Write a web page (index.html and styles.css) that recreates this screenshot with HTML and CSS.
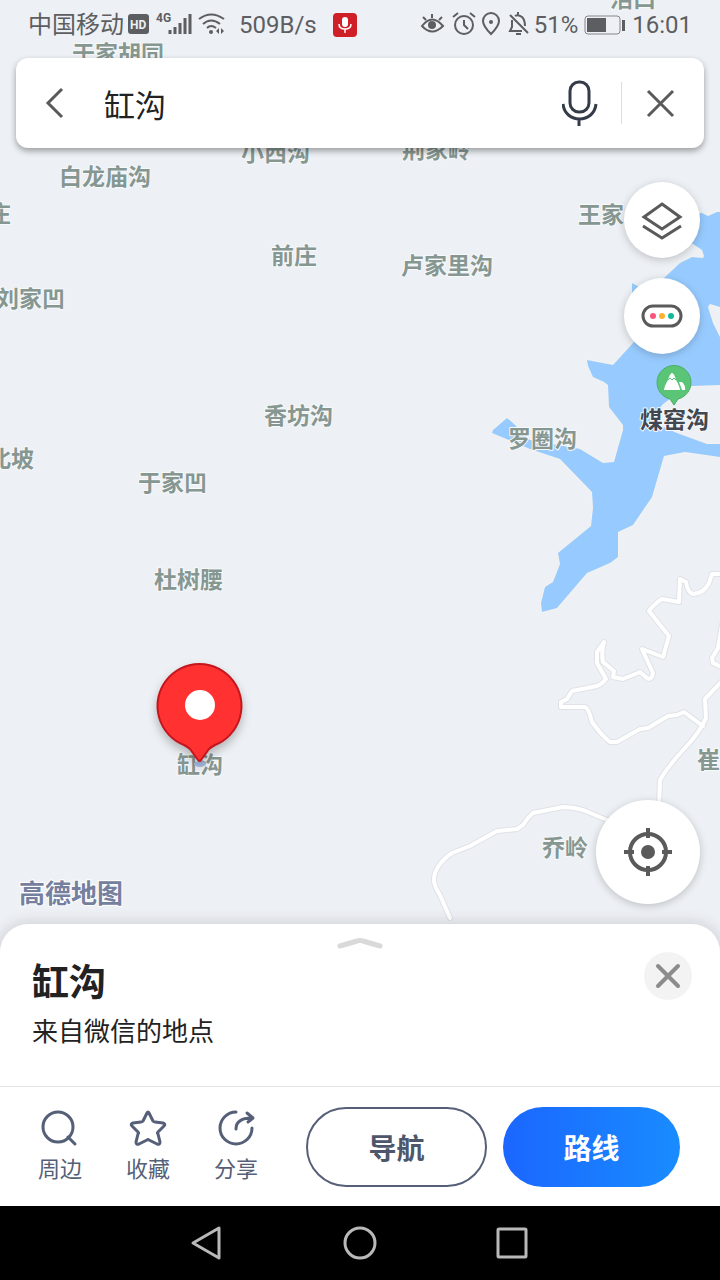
FILE: index.html
```html
<!DOCTYPE html>
<html lang="zh-CN">
<head>
	<meta charset="UTF-8"/>
	<meta name="viewport" content="width=device-width,initial-scale=1.0"/>
	<title>缸沟 - 高德地图</title>
	<link rel="stylesheet" href="styles.css">
</head>
<body>

<!-- Map canvas: water, roads, place names, pins -->
<svg class="map" aria-label="地图">
	<path class="water" d="M720 212L717 212L708 216L702 213L680 214L680 240L693 244L702 250L704 256L703 258L692 257L680 263L665 277L645 290L632 283L632 300L640 330L633 343L613 365L587 360L588 366L593 377L604 382L608 385L609 407L623 425L623 430L614 462L603 463L580 449L530 440L513 423L507 418L493 430L492 433L530 449L560 459L592 492L593 508L591 526L558 553L560 564L553 582L545 587L541 603L542 612L557 608L587 573L610 563L618 557L618 532L633 525L652 497L664 456L685 452L720 457L720 444L707 444L677 433L661 426L657 416L662 405L680 391L692 386L720 385L720 337L713 323L708 307L710 304L720 307Z"/>
	<g class="road-edge">
		<use href="#roads"/>
	</g>
	<g class="road">
		<g id="roads">
			<path d="M724 574L712 574L709 583Q704 593 693 594Q688 593 686 582L680 579L679 602L662 599Q655 603 649 611L669 636L663 657L642 649L653 673Q652 679 648 679L640 672L623 679L613 677L614 671L603 662Q601 652 604 642L597 652L597 663L606 679Q602 684 597 686L572 691L567 699L561 702V707L585 707Q589 709 592 722Q602 736 610 742H617L640 729L648 728L668 716L677 715L684 712L703 726"/>
			<path d="M724 679L705 699L706 718Q700 732 685 748Q668 766 660 780L659 806"/>
			<path d="M722 625L718 648L712 658L713 663L724 668"/>
			<path d="M612 822L583 810Q572 807 563 807L533 813Q527 818 523 825L517 829L497 831L470 846L452 853Q443 859 438 867Q434 873 434 880Q434 886 440 895L450 918"/>
		</g>
	</g>
	<g class="place">
		<text x="72" y="62">于家胡同</text>
		<text x="610" y="7">活口</text>
		<text x="241" y="161">小西沟</text>
		<text x="402" y="158">荆家岭</text>
		<text x="59" y="185">白龙庙沟</text>
		<text x="-12" y="222">庄</text>
		<text x="578" y="223">王家</text>
		<text x="271" y="264">前庄</text>
		<text x="401" y="274">卢家里沟</text>
		<text x="-4" y="307">刘家凹</text>
		<text x="264" y="424">香坊沟</text>
		<text x="-12" y="467">北坡</text>
		<text x="508" y="447">罗圈沟</text>
		<text x="138" y="491">于家凹</text>
		<text x="154" y="588">杜树腰</text>
		<text x="177" y="773">缸沟</text>
		<text x="697" y="768">崔</text>
		<text x="542" y="856">乔岭</text>
	</g>
	<path class="park-pin" d="M674 405L670 399A17 17 0 1 1 678 399Z"/>
	<path class="park-hill" d="M664 390Q664 387 668 380Q670 373 672 373T676 380Q680 387 680 390ZM679 382L682 382Q686 386 685 390L682 390Z"/>
	<path class="park-snow" d="M668 380L670 378L672 380L674 378L676 380"/>
	<text class="place-poi" x="640" y="428">煤窑沟</text>
	<text class="brand" x="19" y="903">高德地图</text>
	<ellipse class="pin-base" cx="200" cy="764" rx="6" ry="3"/>
	<path class="pin" d="M198 760L190 749Q188 747 184 745A42 42 0 1 1 215 745Q211 747 209 749L201 760Q200 762 198 760Z"/>
	<circle cx="200" cy="705" r="15" fill="#fff"/>
</svg>

<header class="status">
	<span>中国移动</span>
	<svg class="status-net" width="100" height="28" viewBox="0 0 100 28" aria-hidden="true">
		<rect x="1" y="3" width="21" height="20" rx="3"/>
		<text class="hd" x="3" y="18">HD</text>
		<text class="net" x="29" y="11">4G</text>
		<path class="bars" d="M43 19V23M48 16V23M53 12V23M58 7V23M63 3V23"/>
		<path class="line" d="M72 8Q84 -1 97 8M76 13Q84 6 93 13M80 17Q84 13 89 17"/>
		<circle cx="84" cy="21" r="2"/>
		<path d="M89 20L92 17V23ZM97 20L94 17V23Z"/>
	</svg>
	<span class="speed">509B/s</span>
	<svg width="24" height="24" viewBox="0 0 24 24" aria-hidden="true">
		<rect width="24" height="24" rx="4" fill="#cf2027"/>
		<rect x="9" y="4" width="6" height="10" rx="3" fill="#fff"/>
		<path d="M6 11Q6 16 12 16T18 11M12 16V20" fill="none" stroke="#fff" stroke-width="1.5"/>
	</svg>
	<svg class="status-tools" width="110" height="28" viewBox="0 0 110 28" aria-hidden="true">
		<path class="line" d="M2 15Q12 2 23 15Q12 26 2 15ZM3 6L6 9M12 3V7M22 6L19 9"/>
		<circle cx="12" cy="14" r="4"/>
		<circle class="line" cx="44" cy="14" r="9"/>
		<path class="line" d="M44 9V14L48 18M33 6L38 2M50 2L55 6"/>
		<path class="line" d="M71 23Q63 15 63 10A8 8 0 0 1 79 10Q79 15 71 23Z"/>
		<circle cx="71" cy="11" r="2"/>
		<path class="line" d="M90 4L108 22M92 9V16L90 20H102M95 5Q98 3 102 6Q105 9 105 15M98 1V4M96 23H101"/>
	</svg>
	<span>51%</span>
	<svg class="battery" width="42" height="22" viewBox="0 0 42 22" aria-hidden="true">
		<rect class="thin" x="1" y="2" width="35" height="18" rx="3"/>
		<rect x="3" y="4" width="19" height="14"/>
		<path d="M38 6H41V17H38Z"/>
	</svg>
	<span>16:01</span>
</header>

<form class="search">
	<button class="back" type="button" aria-label="返回">
		<svg width="24" height="36" viewBox="0 0 24 36"><path d="M19 4L5 18L19 32"/></svg>
	</button>
	<input type="text" aria-label="搜索地点" value="缸沟">
	<button class="voice" type="button" aria-label="语音搜索">
		<svg width="36" height="48" viewBox="0 0 36 48"><rect x="8" y="3" width="19" height="30" rx="9"/><path d="M1 25C3 45 32 45 34 25M17 40V47"/></svg>
	</button>
	<button class="clear" type="button" aria-label="清除">
		<svg width="30" height="30" viewBox="0 0 30 30"><path d="M2 3L27 28M27 3L2 28"/></svg>
	</button>
</form>

<main class="controls">
	<button class="round" type="button" aria-label="图层">
		<svg width="44" height="40" viewBox="0 0 44 40"><path d="M22 4L40 17L22 29L4 17ZM3 26L22 38L41 26"/></svg>
	</button>
	<button class="round" type="button" aria-label="路况">
		<svg width="44" height="26" viewBox="0 0 44 26"><rect x="3" y="3" width="38" height="20" rx="10"/><circle cx="13" cy="13" r="3" fill="#f8557b" stroke="none"/><circle cx="22" cy="13" r="3" fill="#fbb033" stroke="none"/><circle cx="31" cy="13" r="3" fill="#13b99b" stroke="none"/></svg>
	</button>
	<button class="round locate" type="button" aria-label="定位">
		<svg width="48" height="48" viewBox="0 0 48 48"><circle cx="24" cy="24" r="18"/><circle cx="24" cy="24" r="7" fill="#5a5a5a" stroke="none"/><path d="M24 0V10M24 38V48M0 24H10M38 24H48"/></svg>
	</button>
</main>

<section class="sheet">
	<button class="handle" type="button" aria-label="展开">
		<svg width="48" height="14" viewBox="0 0 48 14"><path d="M4 10L21 5Q24 4 27 5L44 10"/></svg>
	</button>
	<div class="poi">
		<div>
			<h1>缸沟</h1>
			<p>来自微信的地点</p>
		</div>
		<button class="close" type="button" aria-label="关闭">
			<svg width="26" height="26" viewBox="0 0 26 26"><path d="M3 3L23 23M23 3L3 23"/></svg>
		</button>
	</div>
	<div class="actions">
		<button class="action" type="button">
			<svg width="40" height="40" viewBox="0 0 40 40"><circle cx="18" cy="19" r="15"/><path d="M28 29L35 36"/></svg>
			周边
		</button>
		<button class="action" type="button">
			<svg width="40" height="40" viewBox="0 0 40 40"><path d="M19 5Q20 3 21 5L25 13Q26 14 27 14L35 15Q38 16 36 18L30 24Q29 25 30 26L32 34Q32 37 29 36L21 32Q20 31 19 32L11 36Q8 37 8 34L10 26Q11 25 10 24L4 18Q2 16 5 15L13 14Q14 14 15 13Z"/></svg>
			收藏
		</button>
		<button class="action" type="button">
			<svg width="40" height="40" viewBox="0 0 40 40"><path d="M20 4A16 16 0 1 0 36 20M20 21Q20 10 36 10M31 5L37 10L32 14"/></svg>
			分享
		</button>
		<button class="pill" type="button">导航</button>
		<button class="pill route" type="button">路线</button>
	</div>
</section>

<nav class="system">
	<button type="button" aria-label="后退"><svg width="36" height="36" viewBox="0 0 36 36"><path d="M29 3V33L3 18Z"/></svg></button>
	<button type="button" aria-label="主屏幕"><svg width="36" height="36" viewBox="0 0 36 36"><circle cx="18" cy="18" r="15"/></svg></button>
	<button type="button" aria-label="最近任务"><svg width="36" height="36" viewBox="0 0 36 36"><rect x="4" y="4" width="28" height="28" rx="1"/></svg></button>
</nav>

</body>
</html>
```
FILE: styles.css
```css
* {box-sizing: border-box;}
html {
	height: 100%;
}
body {
	position: relative;
	display: flex;
	flex-direction: column;
	min-height: 100%;
	margin: 0;
	overflow-x: hidden;
	background: #edf0f4;
	color: #222;
	font-family: Roboto, "Noto Sans CJK SC", sans-serif;
}
button {
	display: flex;
	align-items: center;
	justify-content: center;
	margin: 0;
	padding: 0;
	border: 0;
	background: none;
	font-family: inherit;
	cursor: pointer;
}
svg {
	display: block;
	flex: none;
}
button svg {
	fill: none;
	stroke: #5a5a5a;
	stroke-width: 4;
}

/* Map */
.map {
	position: absolute;
	top: 0;
	left: 0;
	z-index: -1;
	width: 100%;
	height: 100%;
}
.water {
	fill: #97cbff;
	stroke: #f3f2ef;
	stroke-width: 2;
	paint-order: stroke;
}
.road, .road-edge {
	fill: none;
	stroke: #fff;
	stroke-width: 4;
	stroke-linecap: round;
	stroke-linejoin: round;
}
.road-edge {
	stroke: #dfe2e6;
	stroke-width: 6;
}
.place, .place-poi {
	fill: #869792;
	stroke: #f7f9fa;
	stroke-width: 2;
	stroke-linejoin: round;
	paint-order: stroke;
	font-size: 23px;
	font-weight: 700;
}
.place-poi {
	fill: #414851;
}
.brand {
	fill: #75809f;
	stroke: #fff;
	stroke-width: 2;
	paint-order: stroke;
	font-size: 26px;
	font-weight: 700;
}
.park-pin {
	fill: #5ac576;
	stroke: #49ad68;
}
.park-hill {
	fill: #fff;
}
.park-snow {
	fill: none;
	stroke: #5ac576;
}
.pin {
	fill: #ff3131;
	stroke: #c4161c;
	stroke-width: 2;
	filter: drop-shadow(0 5px 5px rgba(0,0,0,.25));
}
.pin-base {
	fill: #a9bfe6;
}

/* Status bar */
.status {
	display: flex;
	align-items: center;
	height: 50px;
	padding: 0 28px;
	color: #5d5e61;
	fill: #5d5e61;
	font-size: 24px;
	line-height: 24px;
	white-space: nowrap;
}
.status-net {
	margin-left: 3px;
}
.status .hd {
	fill: #edf0f4;
	font-size: 12px;
	font-weight: 700;
}
.status .net {
	font-size: 12px;
	font-weight: 700;
}
.status .line, .status .bars {
	fill: none;
	stroke: #5d5e61;
	stroke-width: 2;
}
.status .bars {
	stroke-width: 3;
}
.status .thin {
	fill: none;
	stroke: #85868a;
}
.speed {
	margin: 0 16px 0 12px;
}
.status-tools {
	margin: 0 4px 0 auto;
}
.battery {
	margin: 0 6px;
}

/* Search box */
.search {
	display: flex;
	height: 90px;
	margin: 8px 16px 0;
	padding-right: 4px;
	border-radius: 12px;
	background: #fff;
	box-shadow: 0 3px 6px rgba(0,0,0,.35);
}
.search svg {
	stroke-width: 3;
}
.search input {
	flex: 1;
	min-width: 0;
	padding: 0 10px;
	border: 0;
	outline: 0;
	background: none;
	color: #222;
	font-family: "Noto Sans CJK SC", sans-serif;
	font-size: 31px;
}
.back, .clear {
	width: 78px;
}
.voice {
	position: relative;
	width: 84px;
}
.voice::after {
	content: "";
	position: absolute;
	top: 24px;
	right: 0;
	bottom: 24px;
	width: 1px;
	background: #dedede;
}
.voice svg {
	stroke: #353c49;
}

/* Floating map buttons */
.controls {
	display: flex;
	flex: 1;
	flex-direction: column;
	align-items: flex-end;
	gap: 20px;
	padding: 34px 20px 20px;
}
.round {
	width: 76px;
	height: 76px;
	border-radius: 50%;
	background: #fff;
	box-shadow: 0 2px 8px rgba(0,0,0,.2);
}
.round svg {
	stroke-width: 3;
}
.locate {
	width: 104px;
	height: 104px;
	margin-top: auto;
}
.locate svg {
	stroke-width: 4;
}

/* Bottom sheet */
.sheet {
	border-radius: 28px 28px 0 0;
	background: #fff;
	box-shadow: 0 0 16px rgba(60,40,60,.2);
}
.handle {
	width: 100%;
	height: 28px;
	padding-top: 9px;
}
.handle svg {
	stroke: #d9d9d9;
	stroke-width: 5;
	stroke-linecap: round;
}
.poi {
	display: flex;
	justify-content: space-between;
	padding: 0 28px 38px 32px;
}
h1, p {
	margin: 0;
}
h1 {
	font-size: 37px;
	font-weight: 700;
	line-height: 64px;
}
p {
	font-size: 26px;
	line-height: 32px;
}
.close {
	width: 48px;
	height: 48px;
	border-radius: 50%;
	background: #f3f3f3;
}
.close svg {
	stroke: #8c8c8c;
	stroke-linecap: round;
}
.actions {
	display: flex;
	align-items: center;
	height: 120px;
	padding: 0 40px 0 16px;
	border-top: 1px solid #e4e4e6;
}
.action {
	flex-direction: column;
	gap: 6px;
	width: 88px;
	color: #555f77;
	font-size: 22px;
	line-height: 32px;
}
.action svg {
	stroke: #555f77;
	stroke-width: 3;
	stroke-linejoin: round;
	stroke-linecap: round;
}
.pill {
	flex: 1;
	height: 80px;
	margin-left: 16px;
	border: 2px solid #555f77;
	border-radius: 40px;
	color: #4d566b;
	font-size: 28px;
	font-weight: 700;
}
.action + .pill {
	margin-left: 26px;
}
.route {
	border: 0;
	background: linear-gradient(90deg, #1b66ff, #198cff);
	color: #fff;
}

/* System navigation */
.system {
	display: flex;
	align-items: center;
	justify-content: center;
	gap: 116px;
	height: 74px;
	background: #000;
}
.system svg {
	stroke: #b9b9b9;
	stroke-width: 3;
	stroke-linejoin: round;
}
```
